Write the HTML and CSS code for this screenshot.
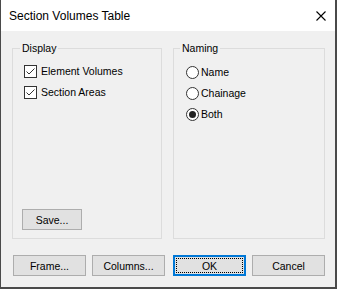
FILE: index.html
```html
<!DOCTYPE html>
<html>
<head>
<meta charset="utf-8">
<link rel="stylesheet" href="styles.css">
</head>
<body>
<div class="window">
  <div class="titlebar">
    <span class="title">Section Volumes Table</span>
    <svg class="close" width="10" height="10" viewBox="0 0 10 10"><path d="M0.5 0.5 L9.5 9.5 M9.5 0.5 L0.5 9.5" stroke="#000" stroke-width="1.1" fill="none"/></svg>
  </div>
  <div class="client">
    <div class="groups">
      <fieldset class="group display">
        <legend>Display</legend>
        <div class="options">
          <label class="opt"><span class="check"><svg width="11" height="11" viewBox="0 0 11 11"><path d="M1.5 5.5 L4 8 L9.5 2.5" stroke="#333" stroke-width="1" fill="none"/></svg></span>Element Volumes</label>
          <label class="opt"><span class="check"><svg width="11" height="11" viewBox="0 0 11 11"><path d="M1.5 5.5 L4 8 L9.5 2.5" stroke="#333" stroke-width="1" fill="none"/></svg></span>Section Areas</label>
        </div>
        <button class="btn save">Save...</button>
      </fieldset>
      <fieldset class="group naming">
        <legend>Naming</legend>
        <div class="options">
          <label class="opt"><span class="radio"></span>Name</label>
          <label class="opt"><span class="radio"></span>Chainage</label>
          <label class="opt"><span class="radio on"></span>Both</label>
        </div>
      </fieldset>
    </div>
    <div class="buttons">
      <button class="btn">Frame...</button>
      <button class="btn">Columns...</button>
      <button class="btn default"><span class="focus">OK</span></button>
      <button class="btn">Cancel</button>
    </div>
  </div>
</div>
</body>
</html>
```

FILE: styles.css
```css
html, body {
  margin: 0;
  padding: 0;
  background: #3a3a3a;
}
.window {
  width: 337px;
  height: 289px;
  box-sizing: border-box;
  border-left: 1px solid #4a4a4a;
  border-right: 2px solid #4a4a4a;
  border-bottom: 2px solid #4a4a4a;
  display: flex;
  flex-direction: column;
  font-family: "Liberation Sans", Arial, sans-serif;
}
.titlebar {
  height: 31px;
  background: #fff;
  display: flex;
  align-items: center;
  justify-content: space-between;
  padding: 1px 9px 0 8px;
  box-sizing: border-box;
}
.title {
  font-size: 12px;
  color: #000;
}
.close {
  display: block;
}
.client {
  flex: 1;
  background: #f0f0f0;
  padding: 11px 10px 11px 11px;
  display: flex;
  flex-direction: column;
  gap: 16px;
  font-size: 10.5px;
  color: #000;
}
.groups {
  height: 197px;
  display: flex;
  gap: 11px;
}
.group {
  margin: 0;
  padding: 0;
  border: 1px solid #dcdcdc;
  display: flex;
  flex-direction: column;
  align-items: flex-start;
  box-sizing: border-box;
}
.group.display {
  width: 150px;
  padding-bottom: 8px;
}
.group.naming {
  width: 152px;
}
.display .options {
  margin: 10px 0 0 11px;
}
.naming .options {
  margin: 11px 0 0 12px;
}
legend {
  margin-left: 7px;
  padding: 0 2px;
  font-size: 10.5px;
  line-height: 13px;
}
.naming legend {
  margin-left: 6px;
}
.options {
  display: flex;
  flex-direction: column;
  gap: 8px;
}
.opt {
  display: flex;
  align-items: center;
  height: 13px;
  line-height: 13px;
}
.check {
  width: 11px;
  height: 11px;
  border: 1px solid #333;
  background: #fff;
  margin-right: 4px;
  display: flex;
}
.check svg {
  display: block;
}
.radio {
  width: 11px;
  height: 11px;
  border: 1px solid #333;
  border-radius: 50%;
  background: #fff;
  margin-right: 2px;
  display: flex;
  align-items: center;
  justify-content: center;
}
.radio.on::after {
  content: "";
  width: 7px;
  height: 7px;
  border-radius: 50%;
  background: #222;
}
.btn {
  width: 73px;
  height: 21px;
  box-sizing: border-box;
  border: 1px solid #adadad;
  background: #e1e1e1;
  font-family: "Liberation Sans", Arial, sans-serif;
  font-size: 10.5px;
  color: #000;
  padding: 0;
  margin: 0;
  display: flex;
  align-items: center;
  justify-content: center;
}
.save {
  width: 60px;
  margin-top: auto;
  margin-left: 9px;
}
.buttons {
  display: flex;
  gap: 6px;
  padding-left: 1px;
}
.buttons .btn:nth-child(3) {
  margin-left: 2px;
}
.btn.default {
  border: 2px solid #0078d7;
  padding: 1px;
}
.focus {
  flex: 1;
  align-self: stretch;
  border: 1px dotted #000;
  display: flex;
  align-items: center;
  justify-content: center;
}
```
